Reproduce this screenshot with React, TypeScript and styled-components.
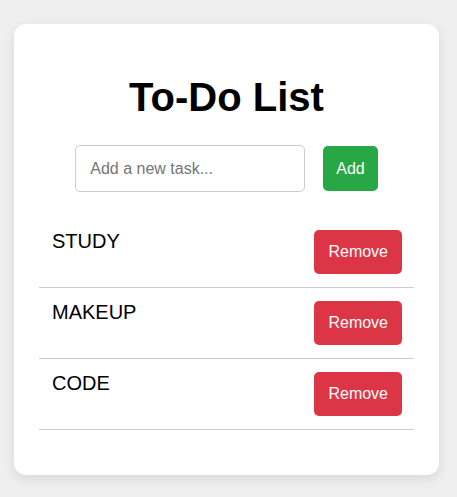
import React, { useState } from "react";
import styled, { createGlobalStyle } from "styled-components";

const GlobalStyle = createGlobalStyle`
  html, body {
    margin: 0;
    padding: 0;
    background: #efefef;
    font-family: "Liberation Sans", Arial, sans-serif;
  }
  * { box-sizing: border-box; }
`;

const Page = styled.div`
  padding: 24px 18px 23px 14px;
`;

const Card = styled.div`
  width: 425px;
  background: #ffffff;
  border-radius: 12px;
  box-shadow: 0 4px 12px rgba(0, 0, 0, 0.1);
  padding: 25px 25px 25px 25px;
`;

const Title = styled.h1`
  margin: 25px 0 25px;
  text-align: center;
  font-size: 40px;
  font-weight: 700;
  color: #000;
  line-height: 46px;
`;

const InputRow = styled.div`
  display: flex;
  justify-content: center;
  align-items: center;
  gap: 18px;
`;

const TaskInput = styled.input`
  width: 230px;
  height: 47px;
  padding: 14px;
  border: 1px solid #ccc;
  border-radius: 5px;
  font-family: "Liberation Sans", Arial, sans-serif;
  font-size: 16px;
  color: #000;
  outline: none;
  &::placeholder {
    color: #757575;
  }
`;

const Button = styled.button<{ $variant: "add" | "remove" }>`
  border: none;
  border-radius: 5px;
  color: #fff;
  font-family: "Liberation Sans", Arial, sans-serif;
  font-size: 16px;
  cursor: pointer;
  padding: 0 ${(p) => (p.$variant === "add" ? "13px" : "14px")};
  height: ${(p) => (p.$variant === "add" ? "45px" : "44px")};
  background: ${(p) => (p.$variant === "add" ? "#28a745" : "#dc3545")};
  flex-shrink: 0;
`;

const List = styled.ul`
  list-style: none;
  margin: 25px 0 20px;
  padding: 0;
`;

const Item = styled.li`
  display: flex;
  justify-content: space-between;
  align-items: flex-start;
  padding: 13px 12px 13px 13px;
  border-bottom: 1px solid #ccc;
`;

const ItemText = styled.span`
  font-size: 20px;
  line-height: 23px;
  color: #000;
`;

export default function App() {
  const [tasks, setTasks] = useState<string[]>(["STUDY", "MAKEUP", "CODE"]);
  const [value, setValue] = useState("");

  const add = () => {
    if (!value.trim()) return;
    setTasks([...tasks, value.trim()]);
    setValue("");
  };

  return (
    <>
      <GlobalStyle />
      <Page>
        <Card>
          <Title>To-Do List</Title>
          <InputRow>
            <TaskInput
              placeholder="Add a new task..."
              value={value}
              onChange={(e) => setValue(e.target.value)}
            />
            <Button $variant="add" onClick={add}>
              Add
            </Button>
          </InputRow>
          <List>
            {tasks.map((t, i) => (
              <Item key={i}>
                <ItemText>{t}</ItemText>
                <Button
                  $variant="remove"
                  onClick={() => setTasks(tasks.filter((_, j) => j !== i))}
                >
                  Remove
                </Button>
              </Item>
            ))}
          </List>
        </Card>
      </Page>
    </>
  );
}
